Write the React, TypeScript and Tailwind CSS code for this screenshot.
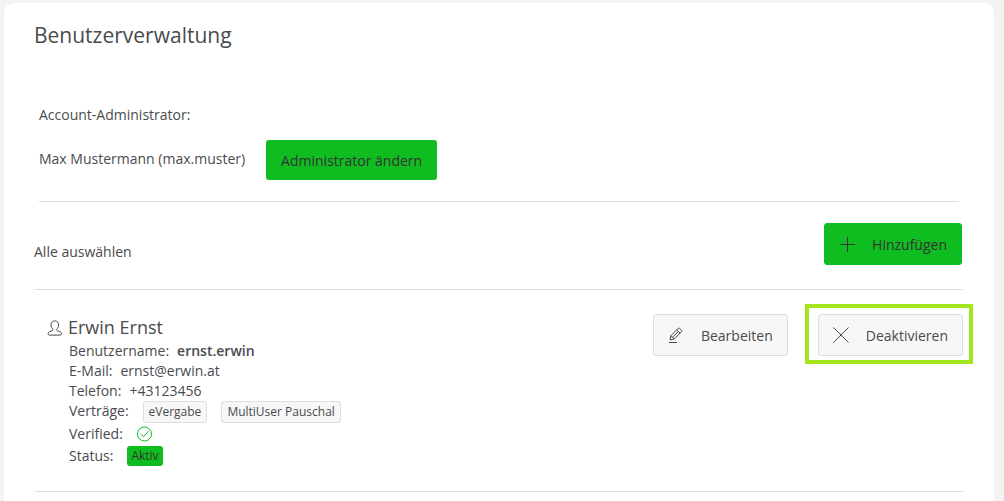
import type { ReactNode } from "react";

type User = {
  name: string;
  username: string;
  email: string;
  phone: string;
  contracts: string[];
  status: string;
};

const users: User[] = [
  {
    name: "Erwin Ernst",
    username: "ernst.erwin",
    email: "ernst@erwin.at",
    phone: "+43123456",
    contracts: ["eVergabe", "MultiUser Pauschal"],
    status: "Aktiv",
  },
];

function PlusIcon() {
  return (
    <svg className="w-4 h-4" viewBox="0 0 16 16" fill="none" stroke="currentColor" aria-hidden="true">
      <path d="M8.5 1v15M1 8.5h15" />
    </svg>
  );
}

function CrossIcon() {
  return (
    <svg className="w-4 h-4" viewBox="0 0 16 16" fill="none" stroke="currentColor" aria-hidden="true">
      <path d="M.5 .5l15 15M15.5 .5l-15 15" />
    </svg>
  );
}

function PencilIcon() {
  return (
    <svg className="w-4 h-4" viewBox="0 0 16 16" fill="none" stroke="currentColor" strokeLinejoin="round" aria-hidden="true">
      <path d="M2 12.800l.9-4.100 7.300-7.400q.7-.6 1.400 0l2 2q.6.7 0 1.400l-7.400 7.300zM2.900 8.700l3.300 3.300M8.800 2.800l3.300 3.300M4.600 10.300l5.900-5.900M1 15.500h8" />
    </svg>
  );
}

function UserIcon() {
  return (
    <svg className="w-4 h-4" viewBox="0 0 16 16" fill="none" stroke="currentColor" aria-hidden="true">
      <path d="M6 9.300C4.700 8.300 4 6.700 4 4.900 4 2.400 5.600.9 7.800.9s3.800 1.500 3.800 4c0 1.800-.7 3.400-2 4.400-.3.800.1 1.200 1 1.500l2.200.7c1.100.4 1.700 1.200 1.700 2.300 0 .9-.6 1.300-1.400 1.300H2.500c-.8 0-1.400-.4-1.400-1.300 0-1.100.6-1.900 1.700-2.300l2.200-.7c.9-.3 1.300-.7 1-1.500z" />
    </svg>
  );
}

function VerifiedIcon() {
  return (
    <svg className="w-4 h-4 text-[#10bd20]" viewBox="0 0 16 16" fill="none" stroke="currentColor" role="img" aria-label="verifiziert">
      <circle cx="7.500" cy="8" r="7" />
      <path d="M3.800 8l2.700 2.800 4.900-5.600" />
    </svg>
  );
}

function IconButton({ icon, label, primary = false }: { icon: ReactNode; label: string; primary?: boolean }) {
  return (
    <button
      type="button"
      className={`flex items-center gap-[17px] h-[42px] px-3.5 rounded-[3px] border ${
        primary ? "bg-[#10bd20] border-[#10bd20] text-[#333]" : "bg-[#f7f7f7] border-[#dedede] text-[#4a4b4d]"
      }`}
    >
      {icon}
      {label}
    </button>
  );
}

function UserEntry({ user }: { user: User }) {
  return (
    <li className="flex justify-between items-start border-b border-[#dedede] pt-6 pb-6">
      <div className="pl-3">
        <h2 className="flex items-center gap-[5px] text-[18px] leading-[27px]">
          <UserIcon />
          {user.name}
        </h2>
        <dl className="pl-[22px] leading-5">
          <div className="flex gap-2">
            <dt>Benutzername:</dt>
            <dd className="font-semibold">{user.username}</dd>
          </div>
          <div className="flex gap-2">
            <dt>E-Mail:</dt>
            <dd>{user.email}</dd>
          </div>
          <div className="flex gap-2">
            <dt>Telefon:</dt>
            <dd>{user.phone}</dd>
          </div>
          <div className="flex gap-3.5">
            <dt>Verträge:</dt>
            {user.contracts.map((contract) => (
              <dd key={contract} className="px-[5px] rounded-[3px] border border-[#dedede] bg-[#f7f7f7] text-[12px] leading-5">
                {contract}
              </dd>
            ))}
          </div>
          <div className="flex items-center gap-3.5 h-[22px]">
            <dt>Verified:</dt>
            <dd>
              <VerifiedIcon />
            </dd>
          </div>
          <div className="flex items-center gap-3.5 h-[22px]">
            <dt>Status:</dt>
            <dd className="px-1 rounded-[3px] bg-[#10bd20] text-[12px] text-[#333]">{user.status}</dd>
          </div>
        </dl>
      </div>
      <div className="flex gap-[30px]">
        <IconButton icon={<PencilIcon />} label="Bearbeiten" />
        <div className="relative">
          <IconButton icon={<CrossIcon />} label="Deaktivieren" />
          <span className="absolute -top-2.5 -bottom-2 -left-[13px] -right-2.5 border-4 border-[#a2e61b] pointer-events-none" />
        </div>
      </div>
    </li>
  );
}

export default function App() {
  return (
    <div className="min-h-screen flex flex-col bg-[#f3f3f3] pt-[3px] pl-1 pr-2.5 font-['Open_Sans',sans-serif] text-[14px] text-[#4a4b4d]">
      <main className="flex-1 bg-white rounded-t-[10px] px-[30px] pt-4">
        <h1 className="text-[21px] leading-8">Benutzerverwaltung</h1>

        <section className="mx-[5px] mt-[54px] pb-[21px] border-b border-[#dedede]">
          <p className="leading-5">Account-Administrator:</p>
          <div className="flex gap-[21px] mt-[15px]">
            <span className="leading-[38px]">Max Mustermann (max.muster)</span>
            <button type="button" className="h-10 px-[15px] rounded-[3px] bg-[#10bd20] text-[#333]">
              Administrator ändern
            </button>
          </div>
        </section>

        <div className="flex justify-between items-end mt-[21px] pr-0.5">
          <button type="button" className="h-[26px] leading-5">Alle auswählen</button>
          <IconButton icon={<PlusIcon />} label="Hinzufügen" primary />
        </div>

        <ul className="mt-6 mx-px border-t border-[#dedede]">
          {users.map((user) => (
            <UserEntry key={user.username} user={user} />
          ))}
        </ul>
      </main>
    </div>
  );
}
